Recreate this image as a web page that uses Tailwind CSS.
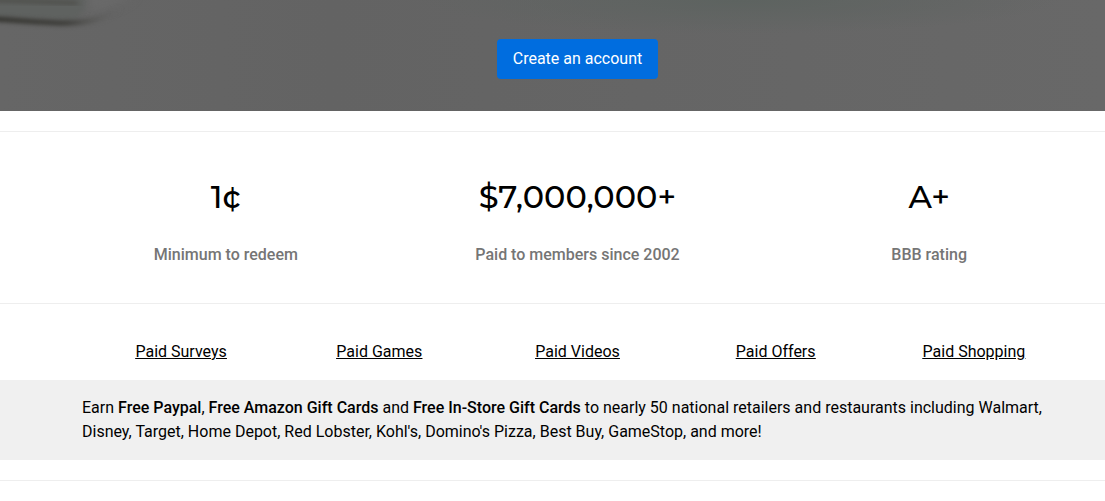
<!DOCTYPE html>
<html lang="en">
<head>
    <meta charset="UTF-8">
    <meta name="viewport" content="width=device-width, initial-scale=1.0">
    <title>Get paid online</title>
    <script src="https://cdn.jsdelivr.net/npm/@tailwindcss/browser@4"></script>
</head>
<body class="bg-white font-[Roboto,sans-serif] text-base text-black">
    <!-- Hero -->
    <section class="relative overflow-hidden bg-[#646464] pt-[39px] pb-8 pl-[50px] flex justify-center">
        <!-- Blurred photo behind the button -->
        <svg class="absolute inset-0 w-full h-full" viewBox="0 0 1105 111" preserveAspectRatio="xMinYMin slice" aria-hidden="true">
            <defs>
                <filter id="soft" x="-20%" y="-100%" width="140%" height="300%" color-interpolation-filters="sRGB"><feGaussianBlur stdDeviation="3 2"/></filter>
                <filter id="softer" x="-50%" y="-100%" width="200%" height="300%" color-interpolation-filters="sRGB"><feGaussianBlur stdDeviation="7 4"/></filter>
                <linearGradient id="base" x1="0" y1="0" x2="1" y2="0">
                    <stop offset="0" stop-color="#666666"/>
                    <stop offset=".3" stop-color="#636363"/>
                    <stop offset="1" stop-color="#686868"/>
                </linearGradient>
                <radialGradient id="tint">
                    <stop offset="0" stop-color="#5d6360"/>
                    <stop offset="1" stop-color="#5d6360" stop-opacity="0"/>
                </radialGradient>
                <linearGradient id="streak" gradientUnits="userSpaceOnUse" x1="0" y1="0" x2="120" y2="0">
                    <stop offset="0" stop-color="#32322d"/>
                    <stop offset=".55" stop-color="#3a3a36"/>
                    <stop offset=".8" stop-color="#555553" stop-opacity=".6"/>
                    <stop offset="1" stop-color="#606060" stop-opacity="0"/>
                </linearGradient>
            </defs>
            <rect width="1105" height="111" fill="url(#base)"/>
            <ellipse cx="740" cy="0" rx="320" ry="34" fill="url(#tint)"/>
            <path d="M84 -6H130Q122 8 92 12Q80 8 84 -6Z" fill="#696969" filter="url(#softer)"/>
            <path d="M-10 -6H84Q90 12 72 20L-10 16Z" fill="#5f6260" filter="url(#soft)"/>
            <path d="M-10 0L78 3" stroke="#4e4e4a" stroke-width="4" fill="none" filter="url(#soft)"/>
            <path d="M-10 19C20 20 45 23 66 23C88 23 110 17 125 4" stroke="url(#streak)" stroke-width="5" fill="none" filter="url(#soft)"/>
        </svg>
        <button type="button" class="relative h-10 px-4 rounded-sm bg-[#006ddf] text-white">Create an account</button>
    </section>

    <!-- Stats -->
    <section class="mt-5 border-y border-[#eeeeee] pt-[41px] pb-9 pl-[50px]">
        <div class="grid grid-cols-3 text-center">
            <div>
                <h2 class="font-[Montserrat,sans-serif] text-[32px] leading-12 font-medium">1¢</h2>
                <p class="mt-[22px] font-medium text-[#757575]">Minimum to redeem</p>
            </div>
            <div>
                <h2 class="font-[Montserrat,sans-serif] text-[32px] leading-12 font-medium">$7,000,000+</h2>
                <p class="mt-[22px] font-medium text-[#757575]">Paid to members since 2002</p>
            </div>
            <div>
                <h2 class="font-[Montserrat,sans-serif] text-[32px] leading-12 font-medium">A+</h2>
                <p class="mt-[22px] font-medium text-[#757575]">BBB rating</p>
            </div>
        </div>
    </section>

    <!-- Links -->
    <nav class="pt-9 pb-4 pl-[82px] pr-8 grid grid-cols-5 text-center underline">
        <a href="#surveys">Paid Surveys</a>
        <a href="#games">Paid Games</a>
        <a href="#videos">Paid Videos</a>
        <a href="#offers">Paid Offers</a>
        <a href="#shopping">Paid Shopping</a>
    </nav>

    <!-- Gift cards -->
    <section class="bg-[#f0f0f0] py-4 pl-[82px] pr-8">
        <p>Earn <b class="font-medium">Free Paypal</b>, <b class="font-medium">Free Amazon Gift Cards</b> and <b class="font-medium">Free In-Store Gift Cards</b> to nearly 50 national retailers and restaurants including Walmart, Disney, Target, Home Depot, Red Lobster, Kohl's, Domino's Pizza, Best Buy, GameStop, and more!</p>
    </section>

    <hr class="mt-5 border-[#eeeeee]">
</body>
</html>
